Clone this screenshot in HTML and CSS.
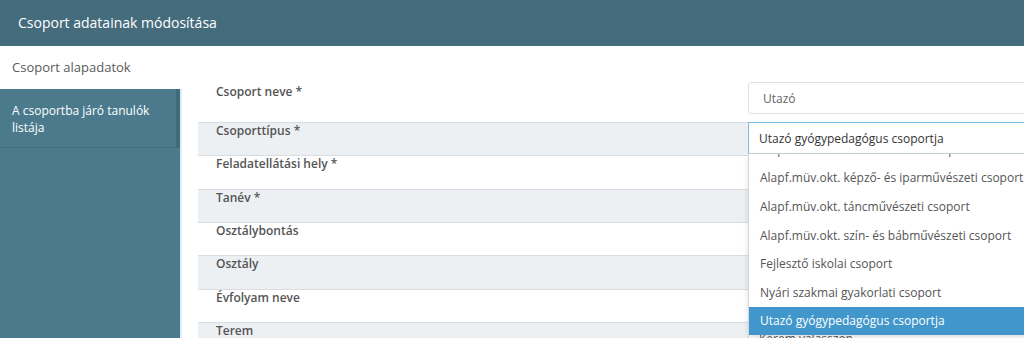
FILE: index.html
```html
<!DOCTYPE html>
<html lang="hu">
<head>
<meta charset="utf-8">
<title>Csoport adatainak módosítása</title>
<link rel="stylesheet" href="styles.css">
</head>
<body>
<header class="header">Csoport adatainak módosítása</header>
<div class="layout">
  <aside class="sidebar">
    <div class="tab-active">Csoport alapadatok</div>
    <nav class="nav">
      <div class="nav-item">A csoportba járó tanulók listája</div>
    </nav>
  </aside>
  <main class="main">
    <div class="form">
      <div class="row row-first">
        <div class="label">Csoport neve *</div>
        <div class="field"><div class="input">Utazó</div></div>
      </div>
      <div class="row row-alt">
        <div class="label">Csoporttípus *</div>
        <div class="field">
          <div class="select select-open">Utazó gyógypedagógus csoportja</div>
          <div class="listbox">
            <div class="options">
              <div class="option">Alapf.müv.okt. zeneművészeti csoport</div>
              <div class="option">Alapf.müv.okt. képző- és iparművészeti csoport</div>
              <div class="option">Alapf.müv.okt. táncművészeti csoport</div>
              <div class="option">Alapf.müv.okt. szín- és bábművészeti csoport</div>
              <div class="option">Fejlesztő iskolai csoport</div>
              <div class="option">Nyári szakmai gyakorlati csoport</div>
              <div class="option option-selected">Utazó gyógypedagógus csoportja</div>
              <div class="option">Kérem válasszon</div>
            </div>
          </div>
        </div>
      </div>
      <div class="row">
        <div class="label">Feladatellátási hely *</div>
        <div class="field"><div class="select">Kérem válasszon</div></div>
      </div>
      <div class="row row-alt">
        <div class="label">Tanév *</div>
        <div class="field"><div class="select">Kérem válasszon</div></div>
      </div>
      <div class="row">
        <div class="label">Osztálybontás</div>
        <div class="field"><div class="select">Kérem válasszon</div></div>
      </div>
      <div class="row row-alt">
        <div class="label">Osztály</div>
        <div class="field"><div class="select">Kérem válasszon</div></div>
      </div>
      <div class="row">
        <div class="label">Évfolyam neve</div>
        <div class="field"><div class="select">Kérem válasszon</div></div>
      </div>
      <div class="row row-alt">
        <div class="label">Terem</div>
        <div class="field"><div class="select select-plain">Kérem válasszon</div></div>
      </div>
    </div>
  </main>
</div>
</body>
</html>
```

FILE: styles.css
```css
* { box-sizing: border-box; }

html, body {
  margin: 0;
  height: 338px;
  overflow: hidden;
  background: #ffffff;
  font-family: "Open Sans", "Noto Sans", sans-serif;
}

.header {
  height: 46px;
  line-height: 46px;
  padding-left: 18px;
  background: #456c7d;
  color: #ffffff;
  font-size: 14px;
}

.layout {
  display: flex;
  height: 292px;
}

.sidebar {
  width: 180px;
  flex: 0 0 180px;
  display: flex;
  flex-direction: column;
}

.tab-active {
  height: 43px;
  line-height: 43px;
  padding-left: 12px;
  font-size: 13px;
  color: #5a5a5a;
  background: #ffffff;
}

.nav {
  flex: 1;
  background: #4b7a8d;
  box-shadow: 2px 0 0 #dceff8;
}

.nav-item {
  padding: 13px 12px 11px 12px;
  font-size: 12px;
  line-height: 17px;
  color: #ffffff;
  border-right: 4px solid #3f6b7d;
  border-bottom: 1px solid #416e80;
}

.main {
  flex: 1;
  min-width: 0;
  overflow: hidden;
  padding: 36px 0 0 18px;
}

.form {
  width: 880px;
}

.row {
  display: grid;
  grid-template-columns: 550px 330px;
  height: 33.33px;
  border-top: 1px solid #d9dde1;
  background: #ffffff;
}

.row-first {
  height: 40px;
  border-top: none;
}

.row-alt {
  background: #edf0f3;
}

.label {
  padding-left: 18px;
  font-size: 12px;
  line-height: 16px;
  font-weight: 600;
  color: #555555;
}

.row-first .label {
  padding-top: 2px;
}

.field {
  position: relative;
}

.input {
  height: 32px;
  line-height: 31px;
  padding-left: 14px;
  border: 1px solid #dcdfe2;
  border-radius: 3px;
  background: #ffffff;
  font-size: 12px;
  color: #666666;
}

.select {
  height: 32px;
  line-height: 31px;
  margin-top: -1px;
  padding-left: 10px;
  border: 1px solid #d5d9dd;
  background: #ffffff;
  font-size: 12px;
  color: #333333;
}

.select-open {
  border-color: #7dbbe2;
  border-bottom-color: #c9d3da;
}

.select-plain {
  color: #555555;
}

.listbox {
  position: absolute;
  top: 31px;
  left: 0;
  width: 330px;
  height: 181px;
  overflow: hidden;
  background: #ffffff;
  border-left: 1px solid #d5d9dd;
  box-shadow: 0 3px 6px rgba(0, 0, 0, 0.12);
  z-index: 5;
}

.options {
  margin-top: -18.2px;
}

.option {
  height: 28.6px;
  line-height: 28.6px;
  padding-left: 11px;
  font-size: 12px;
  color: #555555;
  white-space: nowrap;
}

.option-selected {
  background: #4197cb;
  color: #ffffff;
}
```
